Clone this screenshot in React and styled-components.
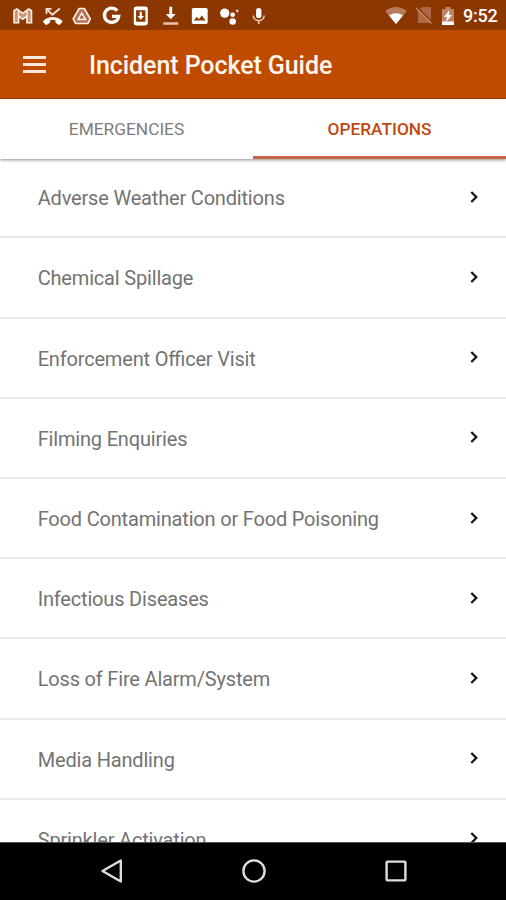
import styled, { createGlobalStyle } from "styled-components"

const items = [
    "Adverse Weather Conditions",
    "Chemical Spillage",
    "Enforcement Officer Visit",
    "Filming Enquiries",
    "Food Contamination or Food Poisoning",
    "Infectious Diseases",
    "Loss of Fire Alarm/System",
    "Media Handling",
    "Sprinkler Activation",
]

function Notifications() {
    return (
        <NotificationIcons>
            <StatusIcon viewBox="0 0 24 24">
                <path d="M1.500 5.500L5 3.500l7 5.300 7-5.300 3.500 2V20h-5.500v-8l-5 3.800L7 12v8H1.500z" fill="#cf9276" stroke="#fff0e8" strokeWidth="1.900" />
                <path d="M7 11V5.500M17 11V5.500" stroke="#fff0e8" strokeWidth="1.500" />
            </StatusIcon>
            <StatusIcon viewBox="0 0 24 24">
                <path d="M4.500 9.500V3.500h6M5 4l6.500 6.500L20.500 3" fill="none" stroke="#f8dfd2" strokeWidth="2.200" />
                <path d="M.500 18.500C6 12.300 18 12.300 23.500 18.500L20 22.500l-4.300-2.700v-3.200q-3.700-1-7.400 0v3.200L4 22.500z" stroke="#fff" strokeWidth="1" strokeLinejoin="round" />
            </StatusIcon>
            <StatusIcon viewBox="0 0 24 24">
                <path d="M9 3h6l7.300 12.500L19.300 21H4.700l-3-5.500z" fill="#b77050" stroke="#fff0e8" strokeWidth="2" strokeLinejoin="round" />
                <path d="M12 8.500l4.300 7.500H7.700z" fill="#8c3600" stroke="#fff0e8" strokeWidth="2" />
                <path d="M12 12.500l1.300 2.200h-2.600z" fill="#d9a78e" />
            </StatusIcon>
            <StatusIcon viewBox="0 0 24 24">
                <path d="M18.500 5.700A8.600 8.600 0 1 0 20.300 12.500H12.300" fill="none" stroke="#fff" strokeWidth="4" />
            </StatusIcon>
            <StatusIcon viewBox="0 0 24 24">
                <rect x="5" y="2" width="14" height="20" rx="1.500" fill="none" stroke="#fff" strokeWidth="2.800" />
                <path d="M4 2h16v3H4zM4 19h16v3H4zM10.700 7h2.600v5H16l-4 4.500L8 12h2.700z" />
            </StatusIcon>
            <StatusIcon viewBox="0 0 24 24">
                <path d="M10.300 1h3.400v8.500H18L12 16 6 9.500h4.300z" />
                <path d="M3 19.500h18v3H3z" fill="#e6c2af" />
            </StatusIcon>
            <StatusIcon viewBox="0 0 24 24">
                <path d="M21.500 19.500v-15c0-1.100-.9-2-2-2h-15c-1.100 0-2 .9-2 2v15c0 1.100.9 2 2 2h15c1.100 0 2-.9 2-2zM8.500 13l2.500 3 3.500-4.500 4.500 6H5z" />
            </StatusIcon>
            <StatusIcon viewBox="0 0 24 24">
                <circle cx="6" cy="8.500" r="5.600" />
                <circle cx="15.500" cy="10.500" r="2.800" />
                <circle cx="21" cy="6" r="1.700" fill="#e6c2af" />
                <circle cx="15.500" cy="18.500" r="3.900" />
            </StatusIcon>
            <StatusIcon viewBox="0 0 24 24">
                <rect x="8.800" y="2.500" width="6.400" height="12" rx="3.200" />
                <path d="M5.500 11.500c0 3.600 3 6 6.500 6s6.500-2.400 6.500-6M12 17v4.500" fill="none" stroke="#e6c2af" strokeWidth="2" />
            </StatusIcon>
        </NotificationIcons>
    )
}

function SystemStatus() {
    return (
        <System>
            <svg width="22" height="17" viewBox="0 0 22 17">
                <path d="M0 4Q11-4 22 4L11 17z" fill="#b77b5b" />
                <path d="M4 8.500Q11 4 18 8.500L11 17z" fill="#fff" />
            </svg>
            <svg width="17" height="17" viewBox="0 0 17 17">
                <path d="M6 0h9v16H2V4z" fill="#ad6945" />
                <path d="M1 0l15.500 15.500" stroke="#8c3600" strokeWidth="1.500" />
                <path d="M0 1l15.500 15.500" stroke="#bd8468" strokeWidth="1.500" />
            </svg>
            <svg width="12" height="18" viewBox="0 0 12 18">
                <path d="M3.500 0h5v2H12v16H0V2h3.500z" fill="#bd8468" />
                <path d="M0 14.500h12V18H0z" fill="#fff" />
                <path d="M7.500 3L2 10h3l-1 5L10 8H7z" fill="#fff" />
            </svg>
            <Clock>9:52</Clock>
        </System>
    )
}

export default function App() {
    return (
        <Screen>
            <GlobalStyle />
            <StatusBar>
                <Notifications />
                <SystemStatus />
            </StatusBar>
            <Header>
                <MenuButton aria-label="Menu">
                    <span />
                    <span />
                    <span />
                </MenuButton>
                <Title>Incident Pocket Guide</Title>
            </Header>
            <Tabs>
                <Tab>EMERGENCIES</Tab>
                <Tab $active>OPERATIONS</Tab>
            </Tabs>
            <List>
                {items.map((item) => (
                    <Row key={item}>
                        <Label>{item}</Label>
                        <Chevron viewBox="0 0 8 12">
                            <path d="M1.300 1L6.300 6l-5 5" />
                        </Chevron>
                    </Row>
                ))}
            </List>
            <NavBar>
                <svg width="22" height="24" viewBox="0 0 22 24">
                    <path d="M19.800 1.500v21L1.500 12z" />
                </svg>
                <svg width="24" height="24" viewBox="0 0 24 24">
                    <circle cx="12" cy="12" r="10.600" />
                </svg>
                <svg width="22" height="22" viewBox="0 0 22 22">
                    <rect x="1.600" y="1.600" width="18.800" height="18.800" rx=".8" />
                </svg>
            </NavBar>
        </Screen>
    )
}

const GlobalStyle = createGlobalStyle`
body{
    margin:0;
    font-family:Roboto, sans-serif;
}
*{
    box-sizing:border-box;
}
`

const Screen = styled.div`
width:100%;
height:900px;
display:flex;
flex-direction:column;
overflow:hidden;
background:#fff;
`

const StatusBar = styled.div`
height:30px;
flex-shrink:0;
display:flex;
justify-content:space-between;
align-items:center;
padding:1px 9px 0 8px;
background:#8c3600;
`

const NotificationIcons = styled.div`
display:flex;
`

const StatusIcon = styled.svg`
width:29.500px;
height:20px;
fill:#fff;
`

const System = styled.div`
display:flex;
align-items:center;
gap:9px;
`

const Clock = styled.span`
width:34px;
font-size:18px;
font-weight:500;
letter-spacing:-.2px;
line-height:20px;
white-space:nowrap;
color:#fff;
`

const Header = styled.header`
height:68.500px;
flex-shrink:0;
display:flex;
align-items:center;
padding:2px 23px 0;
background:#bf4b00;
border-bottom:1px solid #b43c00;
`

const MenuButton = styled.button`
width:23px;
padding:0;
border:none;
background:none;
display:flex;
flex-direction:column;
gap:4px;
span{
    height:3px;
    background:#ffe9dc;
}
`

const Title = styled.h1`
margin:0 0 0 43px;
padding-top:2px;
font-size:25px;
font-weight:500;
letter-spacing:-.08px;
line-height:32px;
white-space:nowrap;
color:#fff6ef;
`

const Tabs = styled.nav`
height:60px;
flex-shrink:0;
display:flex;
position:relative;
background:#fff;
box-shadow:0 1px 3px rgba(0,0,0,.45);
`

const Tab = styled.div`
flex:1;
display:flex;
align-items:center;
justify-content:center;
padding-top:${(props) => (props.$active ? "3px" : "0")};
border-bottom:${(props) => (props.$active ? "3px solid #c8664a" : "none")};
font-size:17.300px;
font-weight:${(props) => (props.$active ? 500 : 400)};
color:${(props) => (props.$active ? "#c04a10" : "#7c7c7c")};
`

const List = styled.div`
flex:1;
min-height:0;
overflow:hidden;
margin-top:-.3px;
`

const Row = styled.div`
height:80.200px;
display:flex;
align-items:center;
justify-content:space-between;
padding:2px 28.500px 0 37.700px;
border-bottom:2px solid #e9e9e9;
`

const Label = styled.span`
font-size:20px;
letter-spacing:-.18px;
font-feature-settings:"liga" 1;
line-height:24px;
color:#737373;
white-space:nowrap;
`

const Chevron = styled.svg`
width:8px;
height:12px;
margin-bottom:3px;
fill:none;
stroke:#151515;
stroke-width:2.300;
`

const NavBar = styled.div`
height:58px;
flex-shrink:0;
display:flex;
align-items:center;
justify-content:space-between;
padding:0 99px 2px 100.500px;
background:#000;
border-top:1px solid #555;
svg{
    fill:none;
    stroke:#dedede;
    stroke-width:2.400;
    stroke-linejoin:round;
}
`
